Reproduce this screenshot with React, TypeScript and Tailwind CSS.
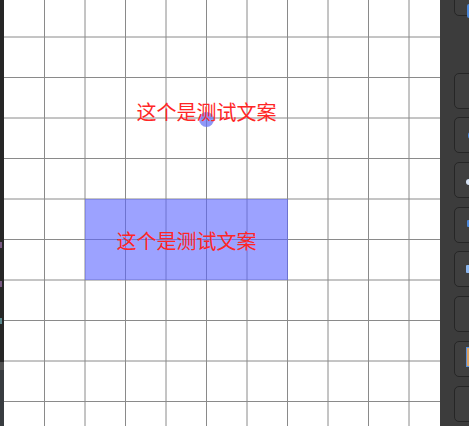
import React from 'react';

const CELL = 40.5;

// grid of the canvas, drawn as svg lines
const GridLines: React.FC = () => {
  const cols = Array.from({ length: 10 }, (_, i) => (i + 1) * CELL);
  const rows = Array.from({ length: 10 }, (_, i) => -3.5 + (i + 1) * CELL);
  return (
    <svg className="absolute inset-0" width="436" height="426">
      {cols.map(x => (
        <line key={'c' + x} x1={x} y1={0} x2={x} y2={426} stroke="#8a8a8a" strokeWidth={1} />
      ))}
      {rows.map(y => (
        <line key={'r' + y} x1={0} y1={y} x2={436} y2={y} stroke="#8a8a8a" strokeWidth={1} />
      ))}
    </svg>
  );
};

interface ToolButtonProps {
  children?: React.ReactNode;
  className?: string;
}

const ToolButton: React.FC<ToolButtonProps> = ({ children, className = '' }) => (
  <div
    className={`relative h-[36px] w-[36px] shrink-0 rounded-[5px] border border-[#262626] bg-[#3f3f3f] ${className}`}
  >
    {children}
  </div>
);

const label = 'font-["Noto_Sans_CJK_SC","Noto_Sans",sans-serif] text-[20px] leading-[20px] text-[#ff2626] whitespace-nowrap';

export default function App() {
  return (
    <div className="flex h-[426px] w-[469px] overflow-hidden bg-[#3c3c3c]">
      {/* editor edge on the left */}
      <div className="relative flex w-[4px] shrink-0 flex-col bg-[#262626]">
        <div className="absolute left-0 top-[242px] h-[6px] w-[2px] bg-[#9a6fa8]/70" />
        <div className="absolute left-0 top-[281px] h-[6px] w-[2px] bg-[#9a6fa8]/70" />
        <div className="absolute left-0 top-[318px] h-[6px] w-[2px] bg-[#6fb0b8]/70" />
        <div className="mt-auto h-[8px] bg-[#505050]" />
        <div className="h-[56px] bg-[#383c40]" />
      </div>

      {/* canvas */}
      <div className="relative w-[436px] shrink-0 bg-white">
        <GridLines />

        <div className="absolute left-[81px] top-[199px] flex h-[81px] w-[203px] items-center justify-center bg-[rgba(90,100,255,0.6)] pt-[2px]">
          <span className={label}>这个是测试文案</span>
        </div>

        <div className="absolute left-[195px] top-[112px] h-[15px] w-[15px] rounded-full bg-[rgba(95,110,245,0.7)]" />
        <span className={`absolute left-[132.5px] top-[102px] ${label}`}>这个是测试文案</span>
      </div>

      {/* tool strip on the right */}
      <div className="flex flex-1 flex-col gap-[8.7px] overflow-hidden bg-[#3c3c3c] pl-[14px]">
        <ToolButton className="-mt-[20px] mb-[48px]">
          <div className="absolute left-[12px] top-[23px] h-[14px] w-[6px] rounded-[2px] bg-[#4a86d8]" />
        </ToolButton>
        <ToolButton />
        <ToolButton>
          <div className="absolute left-[13px] top-[14px] h-[7px] w-[6px] rounded-full bg-[#4a86d8]" />
        </ToolButton>
        <ToolButton>
          <div className="absolute left-[11px] top-[16px] h-[6px] w-[6px] rounded-full bg-[#d8e4f6]" />
        </ToolButton>
        <ToolButton>
          <div className="absolute left-[12px] top-[12px] h-[7px] w-[6px] rounded-[1px] bg-[#4a86d8]" />
        </ToolButton>
        <ToolButton>
          <div className="absolute left-[11px] top-[13px] h-[8px] w-[6px] rounded-[1px] bg-[#8ab4ec]" />
        </ToolButton>
        <ToolButton />
        <ToolButton>
          <div className="absolute left-[11px] top-[5px] h-[20px] w-[8px] border border-[#5b8fd6] bg-[#d9a064]" />
        </ToolButton>
        <ToolButton />
      </div>
    </div>
  );
}
